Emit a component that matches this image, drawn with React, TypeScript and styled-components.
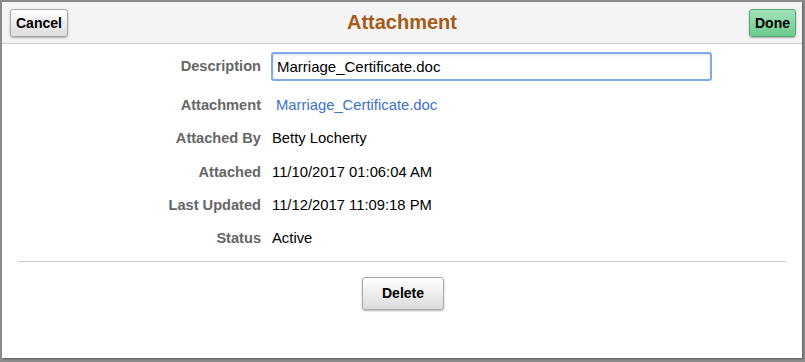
import React from 'react';
import styled, { createGlobalStyle } from 'styled-components';

const GlobalStyle = createGlobalStyle`
  html, body {
    margin: 0;
    padding: 0;
    background: #8c8c8c;
    font-family: Arial, "Liberation Sans", sans-serif;
  }
`;

const Page = styled.div`
  width: 805px;
  height: 362px;
  padding: 2px 0 0 2px;
  box-sizing: border-box;
  overflow: hidden;
`;

const Dialog = styled.div`
  width: 800px;
  height: 356px;
  background: #ffffff;
  box-shadow: 1px 1px 2px rgba(0, 0, 0, 0.35);
  display: flex;
  flex-direction: column;
`;

const Header = styled.div`
  height: 41px;
  background: #f4f4f4;
  border-bottom: 1px solid #cccccc;
  display: flex;
  align-items: center;
  justify-content: space-between;
  padding: 0 6px 0 8px;
  position: relative;
`;

const Title = styled.h1`
  position: absolute;
  left: 0;
  right: 0;
  top: 0;
  bottom: 0;
  margin: 0;
  display: flex;
  align-items: center;
  justify-content: center;
  font-size: 20px;
  font-weight: bold;
  color: #a65a18;
  pointer-events: none;
`;

const Button = styled.button<{ $primary?: boolean }>`
  position: relative;
  z-index: 1;
  height: 28px;
  padding: 0 5px;
  font-family: Arial, "Liberation Sans", sans-serif;
  font-size: 14px;
  font-weight: bold;
  color: #000;
  border-radius: 3px;
  border: 1px solid ${p => (p.$primary ? '#55a874' : '#a9a9a9')};
  background: ${p =>
    p.$primary
      ? 'linear-gradient(#a4e2b8, #6ccb8c)'
      : 'linear-gradient(#ffffff, #dcdcdc)'};
  box-shadow: 0 1px 2px rgba(0, 0, 0, 0.3);
  cursor: pointer;
`;

const Body = styled.div`
  flex: 1;
  display: flex;
  flex-direction: column;
  padding: 0 16px;
`;

const Form = styled.div`
  display: grid;
  grid-template-columns: 243px 1fr;
  column-gap: 11px;
  grid-auto-rows: 33.3px;
  grid-template-rows: 44.5px;
`;

const Label = styled.div`
  display: flex;
  align-items: center;
  justify-content: flex-end;
  font-size: 14.6px;
  font-weight: bold;
  color: #666666;
`;

const Value = styled.div`
  display: flex;
  align-items: center;
  font-size: 14.8px;
  color: #000;
`;

const Link = styled.a`
  color: #3d71c8;
  text-decoration: none;
  font-size: 14.8px;
  padding-left: 4px;
`;

const Input = styled.input`
  width: 441px;
  height: 29px;
  margin-left: -1px;
  box-sizing: border-box;
  padding: 0 4px;
  font-family: Arial, "Liberation Sans", sans-serif;
  font-size: 15px;
  color: #000;
  border: 2px solid #7fa9ee;
  border-radius: 3px;
  outline: none;
  box-shadow: inset 0 1px 3px rgba(0, 0, 0, 0.12);
`;

const Divider = styled.hr`
  margin: 6px 0 0;
  border: 0;
  border-top: 1px solid #cccccc;
`;

const Actions = styled.div`
  display: flex;
  justify-content: center;
  padding: 15px 0 0 2px;
`;

const DeleteButton = styled(Button)`
  width: 82px;
  height: 33px;
`;

const fields = [
  { label: 'Attached By', value: 'Betty Locherty' },
  { label: 'Attached', value: '11/10/2017 01:06:04 AM' },
  { label: 'Last Updated', value: '11/12/2017 11:09:18 PM' },
  { label: 'Status', value: 'Active' },
];

export default function App() {
  return (
    <>
      <GlobalStyle />
      <Page>
        <Dialog>
          <Header>
            <Button>Cancel</Button>
            <Title>Attachment</Title>
            <Button $primary>Done</Button>
          </Header>
          <Body>
            <Form>
              <Label>Description</Label>
              <Value>
                <Input defaultValue="Marriage_Certificate.doc" />
              </Value>
              <Label>Attachment</Label>
              <Value>
                <Link href="#">Marriage_Certificate.doc</Link>
              </Value>
              {fields.map(f => (
                <React.Fragment key={f.label}>
                  <Label>{f.label}</Label>
                  <Value>{f.value}</Value>
                </React.Fragment>
              ))}
            </Form>
            <Divider />
            <Actions>
              <DeleteButton>Delete</DeleteButton>
            </Actions>
          </Body>
        </Dialog>
      </Page>
    </>
  );
}
